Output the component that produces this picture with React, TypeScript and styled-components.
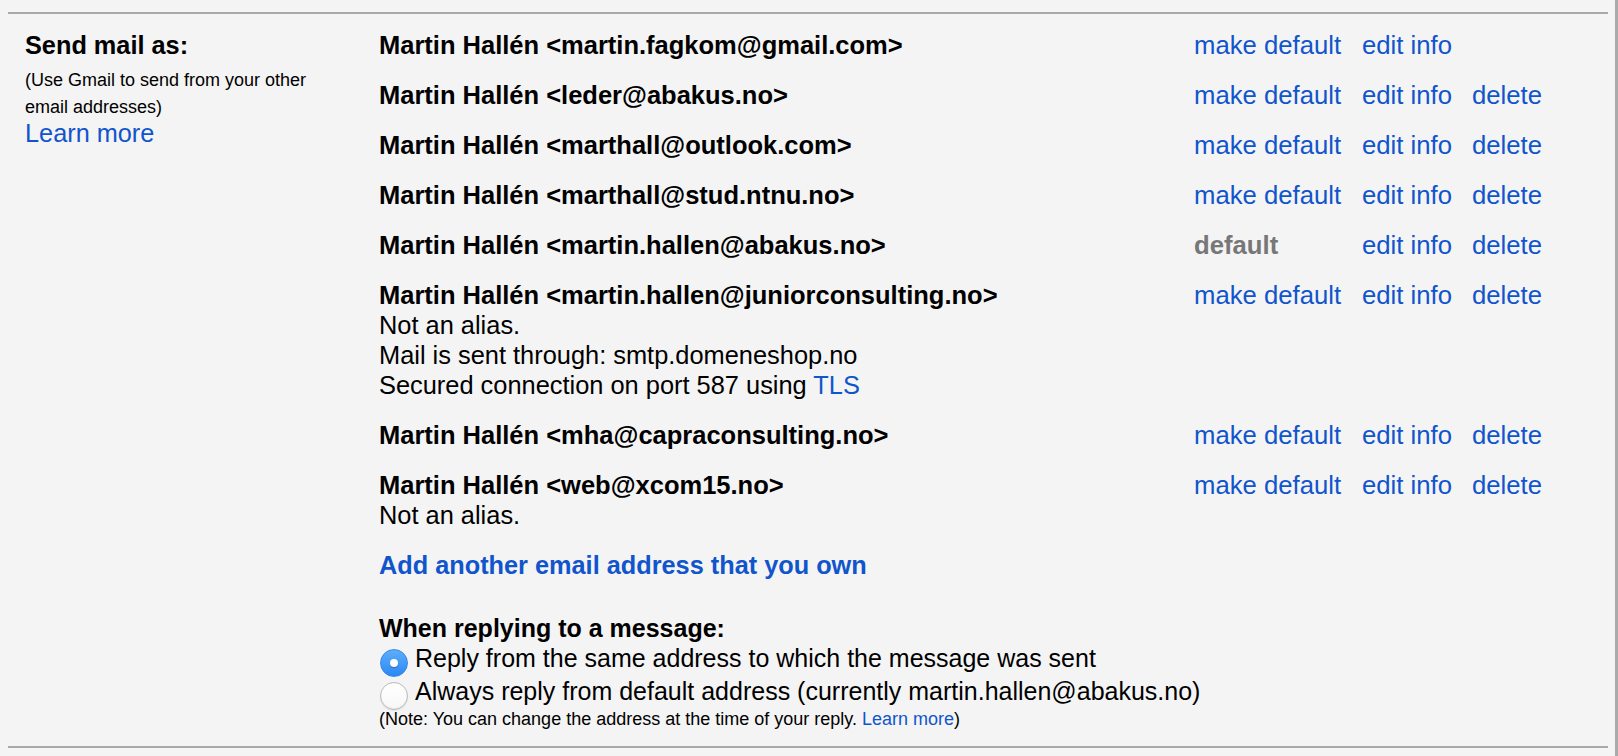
import React from "react";
import styled, { createGlobalStyle, css } from "styled-components";

const GlobalStyle = createGlobalStyle`
  html, body {
    margin: 0;
    padding: 0;
    background: #f4f4f4;
  }
  body {
    font-family: "Liberation Sans", Arial, Helvetica, sans-serif;
    color: #000;
  }
`;

const Page = styled.div`
  box-sizing: border-box;
  min-height: 100vh;
  padding: 12px 7px 0 8px;
  border-right: 3px solid #aaaaaa;
  background: #f4f4f4;
`;

const Rule = styled.div`
  height: 2px;
  background: #a9a9a9;
`;

const Settings = styled.div`
  display: grid;
  grid-template-columns: 354px 1fr;
  padding: 6px 0 16px 17px;
`;

const LeftCell = styled.div`
  padding-top: 10px;
`;

const Title = styled.div`
  font-weight: bold;
  font-size: 25.3px;
  line-height: 30px;
`;

const Hint = styled.div`
  margin-top: 7px;
  font-size: 18px;
  line-height: 26.7px;
`;

const LearnMore = styled.a`
  display: block;
  font-size: 25.3px;
  line-height: 27px;
  color: #1155cc;
  text-decoration: none;
`;

const RightCell = styled.div`
  display: flex;
  flex-direction: column;
`;

const AddressRow = styled.div`
  display: grid;
  grid-template-columns: 815px 168px 110px 1fr;
  padding: 10px 0;
  font-size: 25.4px;
  line-height: 30px;
`;

const NameBlock = styled.div`
  display: flex;
  flex-direction: column;
`;

const Name = styled.span`
  font-weight: bold;
  font-size: 25.5px;
  white-space: nowrap;
`;

const Detail = styled.span`
  white-space: nowrap;
`;

const InlineLink = styled.a`
  color: #1155cc;
  text-decoration: none;
`;

const Action = styled.a<{ $muted?: boolean }>`
  color: #1155cc;
  font-size: 25.7px;
  text-decoration: none;
  white-space: nowrap;
  ${(p) =>
    p.$muted &&
    css`
      color: #777;
      font-weight: bold;
    `}
`;

const AddLink = styled.a`
  display: block;
  padding: 10px 0;
  font-size: 25.3px;
  line-height: 30px;
  font-weight: bold;
  color: #1155cc;
  text-decoration: none;
`;

const ReplySection = styled.div`
  margin-top: 23px;
  font-size: 25px;
  line-height: 30px;
`;

const ReplyTitle = styled.div`
  font-weight: bold;
`;

const Option = styled.label`
  display: flex;
  align-items: flex-start;
  gap: 7px;
  height: 33px;
  padding-left: 1px;
  white-space: nowrap;
`;

const Radio = styled.span<{ $checked?: boolean }>`
  position: relative;
  flex: none;
  box-sizing: border-box;
  width: 28px;
  height: 28px;
  margin-top: 6px;
  border-radius: 50%;
  ${(p) =>
    p.$checked
      ? css`
          background: linear-gradient(#5fadfb, #2a88f4);
          border: 1px solid #3488e6;
          &::after {
            content: "";
            position: absolute;
            left: 50%;
            top: 50%;
            width: 8px;
            height: 8px;
            margin: -4px 0 0 -4px;
            border-radius: 50%;
            background: #fff;
            box-shadow: 0 1px 1px rgba(0, 0, 0, 0.25);
          }
        `
      : css`
          background: linear-gradient(#ffffff, #f7f7f7);
          border: 1px solid #b9b9b9;
          box-shadow: inset 0 -1px 1px rgba(0, 0, 0, 0.06),
            0 1px 1px rgba(0, 0, 0, 0.08);
        `}
`;

const Note = styled.div`
  font-size: 18px;
  line-height: normal;
`;

const NoteLink = styled.a`
  color: #1155cc;
  text-decoration: none;
`;

type Address = {
  email: string;
  isDefault?: boolean;
  canDelete: boolean;
  details?: React.ReactNode[];
};

const addresses: Address[] = [
  { email: "martin.fagkom@gmail.com", canDelete: false },
  { email: "leder@abakus.no", canDelete: true },
  { email: "marthall@outlook.com", canDelete: true },
  { email: "marthall@stud.ntnu.no", canDelete: true },
  { email: "martin.hallen@abakus.no", isDefault: true, canDelete: true },
  {
    email: "martin.hallen@juniorconsulting.no",
    canDelete: true,
    details: [
      "Not an alias.",
      "Mail is sent through: smtp.domeneshop.no",
      <>
        Secured connection on port 587 using <InlineLink href="#">TLS</InlineLink>
      </>,
    ],
  },
  { email: "mha@capraconsulting.no", canDelete: true },
  { email: "web@xcom15.no", canDelete: true, details: ["Not an alias."] },
];

export default function App() {
  return (
    <>
      <GlobalStyle />
      <Page>
        <Rule />
        <Settings>
          <LeftCell>
            <Title>Send mail as:</Title>
            <Hint>
              (Use Gmail to send from your other
              <br />
              email addresses)
            </Hint>
            <LearnMore href="#">Learn more</LearnMore>
          </LeftCell>
          <RightCell>
            {addresses.map((a) => (
              <AddressRow key={a.email}>
                <NameBlock>
                  <Name>
                    Martin Hallén &lt;{a.email}&gt;
                  </Name>
                  {a.details?.map((d, i) => (
                    <Detail key={i}>{d}</Detail>
                  ))}
                </NameBlock>
                {a.isDefault ? (
                  <Action as="span" $muted>
                    default
                  </Action>
                ) : (
                  <Action href="#">make default</Action>
                )}
                <Action href="#">edit info</Action>
                {a.canDelete ? <Action href="#">delete</Action> : <span />}
              </AddressRow>
            ))}
            <AddLink href="#">Add another email address that you own</AddLink>
            <ReplySection>
              <ReplyTitle>When replying to a message:</ReplyTitle>
              <Option>
                <Radio $checked />
                Reply from the same address to which the message was sent
              </Option>
              <Option>
                <Radio />
                Always reply from default address (currently martin.hallen@abakus.no)
              </Option>
              <Note>
                (Note: You can change the address at the time of your reply.{" "}
                <NoteLink href="#">Learn more</NoteLink>)
              </Note>
            </ReplySection>
          </RightCell>
        </Settings>
        <Rule />
      </Page>
    </>
  );
}
